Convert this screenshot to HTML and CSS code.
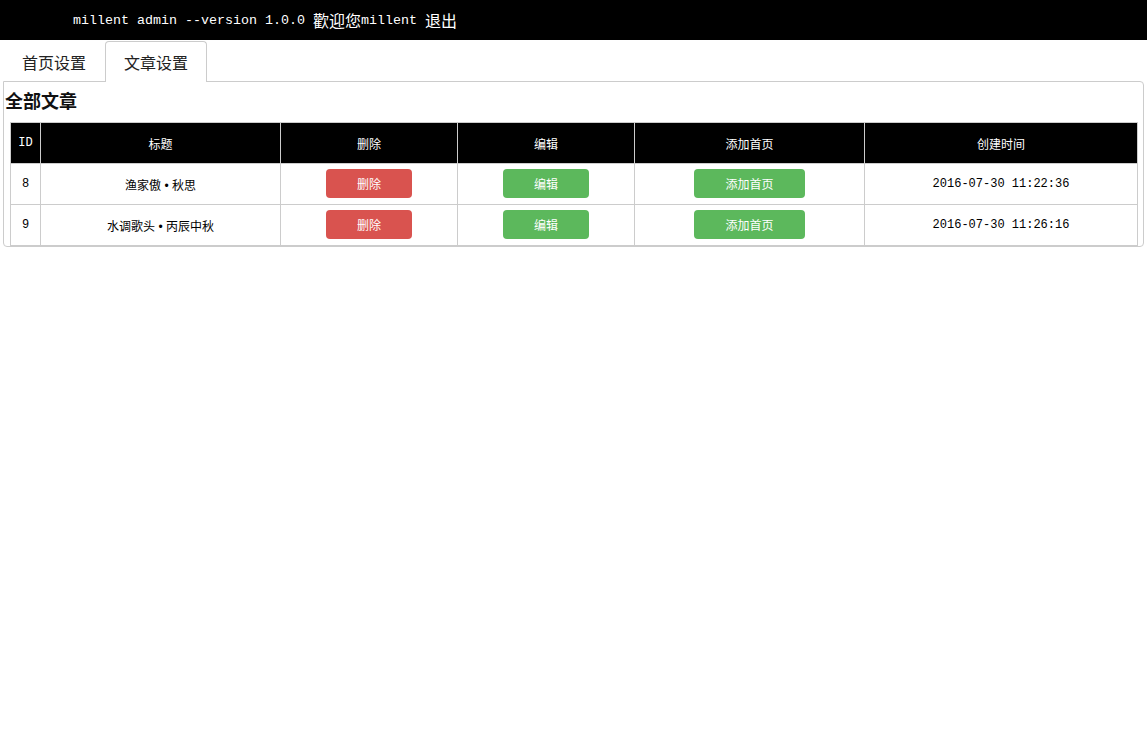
FILE: index.html
```html
<!DOCTYPE html>
<html lang="zh-CN">
<head>
<meta charset="utf-8">
<title>millent admin</title>
<link rel="stylesheet" href="styles.css">
</head>
<body>
<header class="topbar">
  <span class="lat">millent admin --version 1.0.0 </span><span class="cjk">歡迎您</span><span class="lat">millent </span><span class="cjk">退出</span>
</header>
<main class="content">
  <nav class="tabs">
    <a class="tab">首页设置</a>
    <a class="tab active">文章设置</a>
  </nav>
  <section class="panel">
    <h3 class="panel-title">全部文章</h3>
    <table class="grid">
      <colgroup>
        <col class="c-id"><col class="c-title"><col class="c-del"><col class="c-edit"><col class="c-add"><col class="c-time">
      </colgroup>
      <thead>
        <tr><th class="lat">ID</th><th>标题</th><th>删除</th><th>编辑</th><th>添加首页</th><th>创建时间</th></tr>
      </thead>
      <tbody>
        <tr>
          <td class="lat">8</td>
          <td class="name">渔家傲 • 秋思</td>
          <td class="act"><span class="btn btn-red">删除</span></td>
          <td class="act"><span class="btn btn-green">编辑</span></td>
          <td class="act"><span class="btn btn-green">添加首页</span></td>
          <td class="lat">2016-07-30 11:22:36</td>
        </tr>
        <tr>
          <td class="lat">9</td>
          <td class="name">水调歌头 • 丙辰中秋</td>
          <td class="act"><span class="btn btn-red">删除</span></td>
          <td class="act"><span class="btn btn-green">编辑</span></td>
          <td class="act"><span class="btn btn-green">添加首页</span></td>
          <td class="lat">2016-07-30 11:26:16</td>
        </tr>
      </tbody>
    </table>
  </section>
</main>
</body>
</html>
```

FILE: styles.css
```css
html, body {
  margin: 0;
  padding: 0;
  background: #fff;
  color: #000;
  font-family: "Noto Sans CJK SC", "Liberation Sans", sans-serif;
}

.topbar {
  height: 40px;
  background: #000;
  color: #fff;
  display: flex;
  align-items: center;
  padding-left: 73px;
  font-size: 16px;
  white-space: pre;
}
.topbar .lat {
  font-family: "Liberation Mono", "DejaVu Sans Mono", monospace;
  font-size: 13.33px;
}
.topbar .cjk {
  font-family: "Noto Sans CJK SC", sans-serif;
  font-size: 16px;
}

.content {
  margin: 0 3px;
}

.tabs {
  display: flex;
  height: 42px;
  padding-top: 1px;
  box-sizing: border-box;
  position: relative;
  z-index: 1;
}
.tab {
  display: flex;
  align-items: center;
  padding: 0 18px;
  border: 1px solid transparent;
  border-bottom: none;
  border-radius: 4px 4px 0 0;
  font-size: 16px;
  color: #222;
  height: 40px;
  box-sizing: border-box;
}
.tab.active {
  border-color: #ccc;
  background: #fff;
  height: 41px;
}

.panel {
  border: 1px solid #ccc;
  border-radius: 0 4px 4px 4px;
  padding: 7px 0 0;
  margin-top: -1px;
}
.panel-title {
  margin: 0 0 11px 1px;
  font-size: 18px;
  line-height: 22px;
  font-weight: bold;
  color: #111;
}

.grid {
  border-collapse: collapse;
  table-layout: fixed;
  width: calc(100% - 11px);
  margin: 0 5px 0 6px;
  font-size: 12px;
  text-align: center;
}
.c-id { width: 30px; }
.c-title { width: 240px; }
.c-del { width: 177px; }
.c-edit { width: 177px; }
.c-add { width: 230px; }

.grid th, .grid td {
  border: 1px solid #ccc;
  height: 40px;
  padding: 0;
  vertical-align: middle;
}
.grid td.act {
  height: 39px;
  padding-bottom: 1px;
}
.grid th {
  background: #000;
  color: #fff;
  font-weight: normal;
}
.grid .lat {
  font-family: "Liberation Mono", "DejaVu Sans Mono", monospace;
  font-size: 12px;
}
.grid .name {
  font-family: "Liberation Sans", "Noto Sans CJK SC", sans-serif;
}

.btn {
  display: inline-flex;
  align-items: center;
  justify-content: center;
  height: 29px;
  padding: 0 31px;
  border-radius: 4px;
  color: #fff;
  font-size: 12px;
  vertical-align: middle;
}
.btn-red { background: #d9534f; }
.btn-green { background: #5cb85c; }
```
